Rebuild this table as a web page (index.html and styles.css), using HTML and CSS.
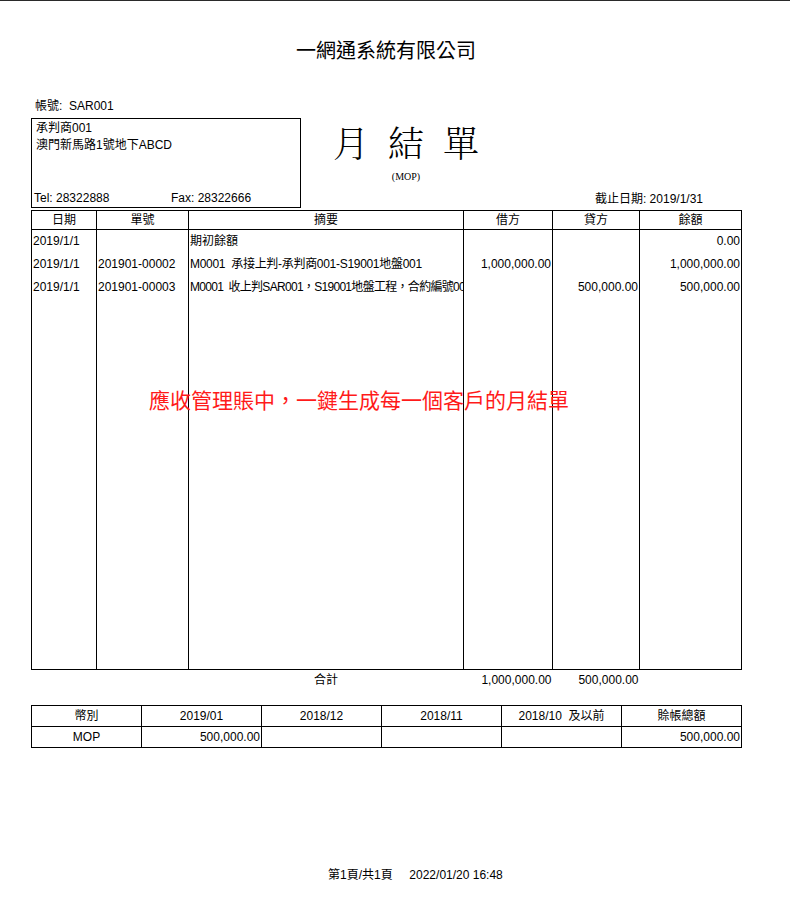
FILE: index.html
```html
<!DOCTYPE html>
<html lang="zh-Hant">
<head>
<meta charset="utf-8">
<title>月結單</title>
<link rel="stylesheet" href="styles.css">
</head>
<body>
<div class="page">
  <h1 class="company">一網通系統有限公司</h1>
  <div class="acct">帳號: &nbsp;SAR001</div>
  <div class="head">
    <div class="cust-box">
      <div class="cust-line">承判商001</div>
      <div class="cust-line">澳門新馬路1號地下ABCD</div>
      <div class="cust-contact"><span class="tel">Tel: 28322888</span><span class="fax">Fax: 28322666</span></div>
    </div>
    <div class="title-block">
      <div class="doc-title">月結單</div>
      <div class="currency">(MOP)</div>
    </div>
    <div class="cutoff">截止日期: 2019/1/31</div>
  </div>

  <table class="ledger">
    <colgroup>
      <col class="c-date"><col class="c-no"><col class="c-desc"><col class="c-dr"><col class="c-cr"><col class="c-bal">
    </colgroup>
    <thead>
      <tr><th>日期</th><th>單號</th><th>摘要</th><th>借方</th><th>貸方</th><th>餘額</th></tr>
    </thead>
    <tbody>
      <tr><td>2019/1/1</td><td></td><td>期初餘額</td><td class="num"></td><td class="num"></td><td class="num">0.00</td></tr>
      <tr><td>2019/1/1</td><td>201901-00002</td><td class="desc">M0001 &nbsp;承接上判-承判商001-S19001地盤001</td><td class="num">1,000,000.00</td><td class="num"></td><td class="num">1,000,000.00</td></tr>
      <tr><td>2019/1/1</td><td>201901-00003</td><td class="desc desc-tight">M0001 &nbsp;收上判SAR001，S19001地盤工程，合約編號001</td><td class="num"></td><td class="num">500,000.00</td><td class="num">500,000.00</td></tr>
      <tr class="filler"><td></td><td></td><td></td><td></td><td></td><td></td></tr>
    </tbody>
    <tfoot>
      <tr><td></td><td></td><td class="total-label">合計</td><td class="num">1,000,000.00</td><td class="num">500,000.00</td><td></td></tr>
    </tfoot>
  </table>

  <table class="aging">
    <colgroup>
      <col class="a-cur"><col class="a-m"><col class="a-m"><col class="a-m"><col class="a-m"><col class="a-m">
    </colgroup>
    <thead>
      <tr><th>幣別</th><th>2019/01</th><th>2018/12</th><th>2018/11</th><th>2018/10 &nbsp;及以前</th><th>賒帳總額</th></tr>
    </thead>
    <tbody>
      <tr><td class="center">MOP</td><td class="num">500,000.00</td><td></td><td></td><td></td><td class="num">500,000.00</td></tr>
    </tbody>
  </table>

  <div class="footer">第1頁/共1頁 &nbsp;&nbsp;&nbsp; 2022/01/20 16:48</div>

  <div class="overlay-note">應收管理賬中，一鍵生成每一個客戶的月結單</div>
</div>
</body>
</html>
```

FILE: styles.css
```css
html, body {
  margin: 0;
  padding: 0;
  background: #fff;
}

body {
  border-top: 1px solid #2a2a2a;
  font-family: "Liberation Sans", "Noto Sans CJK TC", sans-serif;
  font-size: 12px;
  color: #000;
}

.page {
  position: relative;
  padding-left: 31px;
  padding-top: 39px;
  width: 710px;
}

.company {
  margin: 0;
  font-weight: normal;
  font-size: 20px;
  line-height: 20px;
  text-align: center;
  font-family: "Noto Sans CJK TC", sans-serif;
}

.acct {
  margin-top: 40px;
  line-height: 12px;
  padding-left: 4px;
}

.head {
  display: grid;
  grid-template-columns: 270px 210px 1fr;
  margin-top: 6px;
}

.cust-box {
  border: 1px solid #000;
  height: 87px;
  display: flex;
  flex-direction: column;
  padding-top: 1px;
  box-sizing: content-box;
}

.cust-line {
  line-height: 17px;
  padding-left: 4px;
}

.cust-contact {
  margin-top: auto;
  line-height: 17px;
  padding-left: 2px;
  display: flex;
}

.tel {
  width: 137px;
}

.title-block {
  display: flex;
  flex-direction: column;
  align-items: center;
}

.doc-title {
  margin-top: 4px;
  font-size: 36px;
  line-height: 40px;
  letter-spacing: 19px;
  margin-right: -19px;
  font-family: "Noto Serif CJK TC", "Noto Sans CJK TC", serif;
  font-weight: 300;
}

.currency {
  margin-top: 8px;
  font-size: 10px;
  line-height: 14px;
  font-family: "Liberation Serif", serif;
}

.cutoff {
  align-self: end;
  text-align: right;
  line-height: 14px;
  padding-bottom: 2px;
  padding-right: 38px;
}

.ledger, .aging {
  border-collapse: collapse;
  table-layout: fixed;
  width: 710px;
}

.ledger {
  margin-top: 2px;
}

.c-date { width: 65px; }
.c-no { width: 92px; }
.c-desc { width: 275px; }
.c-dr { width: 89px; }
.c-cr { width: 87px; }
.c-bal { width: 102px; }

.ledger th, .aging th {
  border: 1px solid #000;
  font-weight: normal;
  height: 18px;
  padding: 0;
  line-height: 18px;
  text-align: center;
}

.ledger td {
  border-left: 1px solid #000;
  border-right: 1px solid #000;
  height: 23px;
  padding: 0 1px;
  line-height: 23px;
  white-space: nowrap;
  overflow: hidden;
  vertical-align: middle;
}

.ledger td.desc {
  letter-spacing: -0.3px;
  text-overflow: clip;
}

.ledger td.desc-tight {
  letter-spacing: -0.7px;
}

.ledger .filler td {
  height: 370px;
  border-bottom: 1px solid #000;
}

.ledger tfoot td {
  border: none;
  height: 21px;
  line-height: 21px;
}

.num {
  text-align: right;
}

.center {
  text-align: center;
}

.total-label {
  text-align: center;
}

.aging {
  margin-top: 14px;
}

.a-cur { width: 110px; }
.a-m { width: 120px; }

.aging td {
  border: 1px solid #000;
  height: 20px;
  padding: 0 1px;
  line-height: 20px;
}

.aging th {
  height: 20px;
  line-height: 20px;
}

.footer {
  margin-top: 120px;
  margin-left: 297px;
  line-height: 14px;
}

.overlay-note {
  position: absolute;
  left: 149px;
  top: 388px;
  font-size: 21px;
  line-height: 21px;
  color: #ff1a1a;
  white-space: nowrap;
  font-family: "Noto Sans CJK TC", sans-serif;
}
```
